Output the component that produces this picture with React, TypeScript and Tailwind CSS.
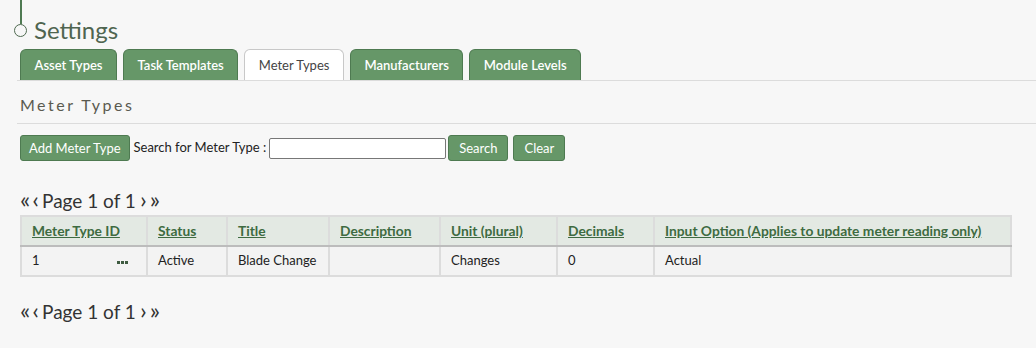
import React from 'react';

const tabs = ['Asset Types', 'Task Templates', 'Meter Types', 'Manufacturers', 'Module Levels'];

const columns = [
  { label: 'Meter Type ID', w: 'w-[126px]' },
  { label: 'Status', w: 'w-[80px]' },
  { label: 'Title', w: 'w-[102px]' },
  { label: 'Description', w: 'w-[111px]' },
  { label: 'Unit (plural)', w: 'w-[117px]' },
  { label: 'Decimals', w: 'w-[97px]' },
  { label: 'Input Option (Applies to update meter reading only)', w: '' },
];

const Pager: React.FC = () => (
  <div className="flex items-center text-[19px] text-[#333] leading-none h-[20px]">
    <span className="text-[24px] mr-[2px] -mt-[3px]">«</span>
    <span className="text-[24px] mr-[3px] -mt-[3px]">‹</span>
    <span>Page 1 of 1</span>
    <span className="text-[24px] ml-[4px] -mt-[3px]">›</span>
    <span className="text-[24px] ml-[3px] -mt-[3px]">»</span>
  </div>
);

const GreenButton: React.FC<{ children: React.ReactNode; wide?: boolean }> = ({ children, wide }) => (
  <button
    className={`h-[26px] ${wide ? 'px-[10px]' : 'px-[8px]'} bg-[#669768] border border-[#4e7a51] rounded-[3px] text-white text-[13px] leading-none`}
  >
    {children}
  </button>
);

export default function App() {
  return (
    <div className="w-[1036px] h-[348px] bg-[#f7f7f7] font-['Lato',sans-serif] overflow-hidden">
      {/* title */}
      <div className="relative h-[49px]">
        <div className="absolute left-[20px] top-0 w-[2px] h-[24px] bg-[#4f7a52]" />
        <div className="absolute left-[14px] top-[24px] w-[13px] h-[13px] rounded-full border-[1.5px] border-[#4f6a50]" />
        <div className="absolute left-[34px] top-[15px] text-[24px] text-[#4f6550] leading-[30px]">Settings</div>
      </div>

      {/* tabs */}
      <div className="flex gap-[6px] pl-[3px] ml-[17px] border-b border-[#dcdcdc]">
        {tabs.map((t) => {
          const active = t === 'Meter Types';
          return (
            <div
              key={t}
              className={`h-[31px] px-[13.5px] pt-[1px] flex items-center rounded-t-[6px] border border-b-0 text-[13px] ${
                active
                  ? 'bg-white border-[#c8c8c8] text-[#444]'
                  : 'bg-[#669768] border-[#4e7a51] text-white font-semibold'
              }`}
            >
              {t}
            </div>
          );
        })}
      </div>

      {/* section header */}
      <div className="ml-[17px] border-b border-[#dcdcdc] pl-[3px] pt-[14px] pb-[8px]">
        <h2 className="text-[16px] tracking-[2.5px] text-[#5a5a50] leading-[20px]">Meter Types</h2>
      </div>

      {/* toolbar */}
      <div className="flex items-center pl-[20px] mt-[10px] h-[28px]">
        <GreenButton>Add Meter Type</GreenButton>
        <span className="ml-[4px] text-[13px] text-[#222]">Search for Meter Type :</span>
        <input className="ml-[3px] w-[177px] h-[21px] bg-white border border-[#777] rounded-[2px]" />
        <div className="ml-[2px]">
          <GreenButton wide>Search</GreenButton>
        </div>
        <div className="ml-[5px]">
          <GreenButton wide>Clear</GreenButton>
        </div>
      </div>

      <div className="pl-[20px] mt-[28px]">
        <Pager />
      </div>

      {/* table */}
      <div className="pl-[20px] mt-[5px]">
        <table className="w-[992px] border-collapse border-2 border-[#dcdcdc] text-[13px]">
          <thead>
            <tr className="bg-[#e3e9e3] h-[30px]">
              {columns.map((c) => (
                <th
                  key={c.label}
                  className={`${c.w} text-left font-bold text-[13.8px] px-[10px] border-2 border-[#dcdcdc] border-b-[#bcbcbc]`}
                >
                  <span className="underline text-[#3e6b41]">{c.label}</span>
                </th>
              ))}
            </tr>
          </thead>
          <tbody>
            <tr className="bg-[#f3f3f3] h-[30px] text-[#222]">
              <td className="px-[10px] border-2 border-[#dcdcdc]">
                <div className="flex items-center justify-between">
                  <span>1</span>
                  <span className="flex gap-[1px] mr-[8px] mt-[3px]">
                    <span className="w-[3px] h-[3px] bg-[#3e5b40]" />
                    <span className="w-[3px] h-[3px] bg-[#3e5b40]" />
                    <span className="w-[3px] h-[3px] bg-[#3e5b40]" />
                  </span>
                </div>
              </td>
              <td className="px-[10px] border-2 border-[#dcdcdc]">Active</td>
              <td className="px-[10px] border-2 border-[#dcdcdc]">Blade Change</td>
              <td className="px-[10px] border-2 border-[#dcdcdc]"></td>
              <td className="px-[10px] border-2 border-[#dcdcdc]">Changes</td>
              <td className="px-[10px] border-2 border-[#dcdcdc]">0</td>
              <td className="px-[10px] border-2 border-[#dcdcdc]">Actual</td>
            </tr>
          </tbody>
        </table>
      </div>

      <div className="pl-[20px] mt-[24px]">
        <Pager />
      </div>
    </div>
  );
}
